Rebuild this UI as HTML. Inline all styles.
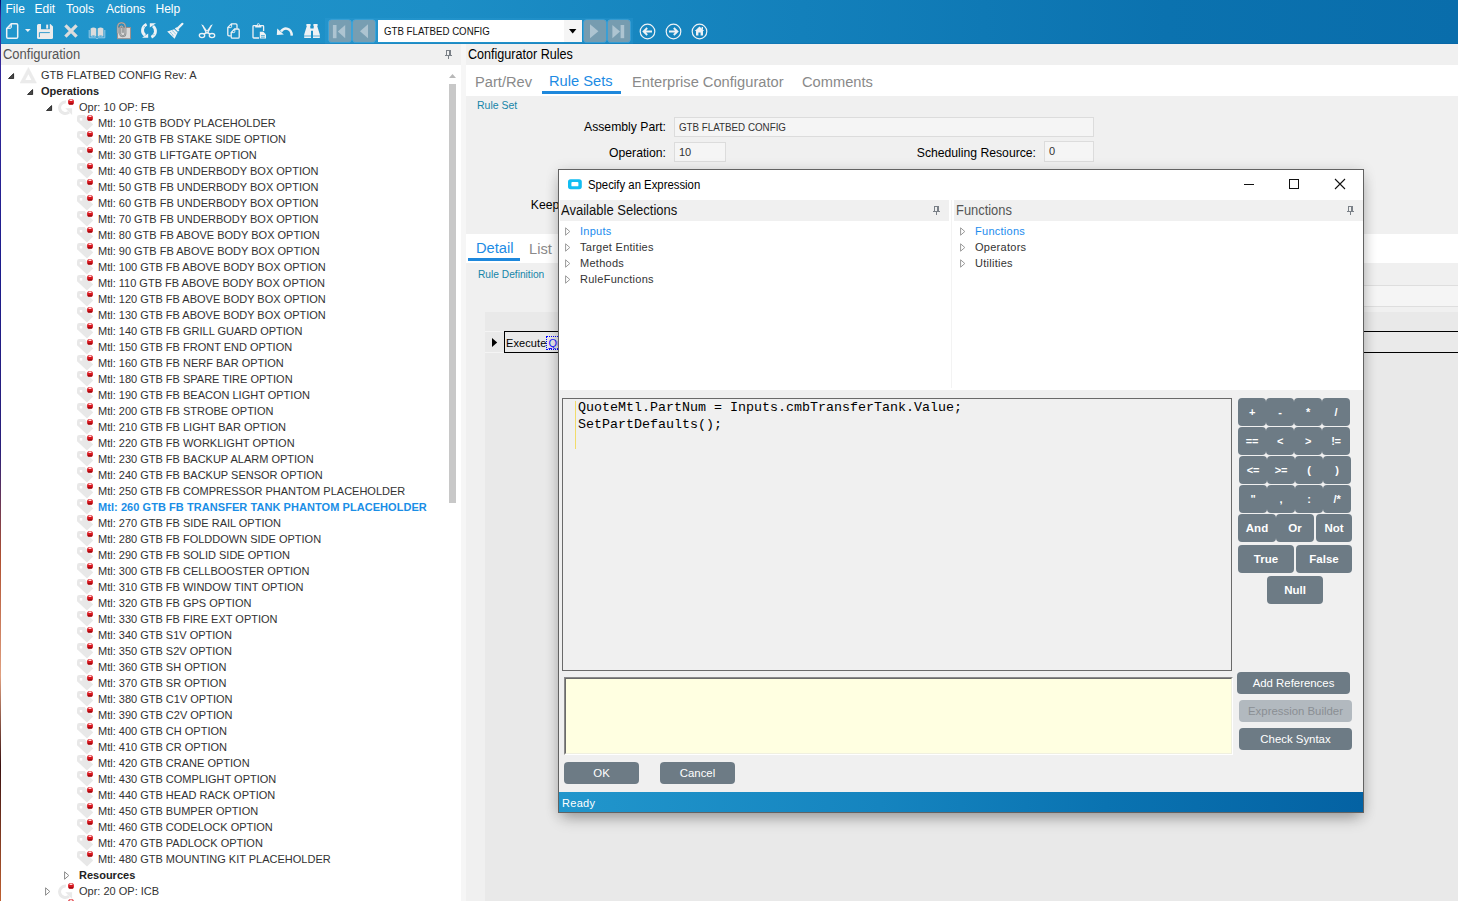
<!DOCTYPE html>
<html lang="en"><head><meta charset="utf-8"><title>Configurator Rules</title>
<style>
*{box-sizing:border-box;margin:0;padding:0}
html,body{width:1458px;height:901px;overflow:hidden;background:#f0f0f0}
body{position:relative;font-family:"Liberation Sans",sans-serif;font-size:12px;color:#222;-webkit-font-smoothing:antialiased}
.abs{position:absolute}
.t{position:absolute;white-space:nowrap;line-height:1}
#edge{left:0;top:0;width:1px;height:901px;background:linear-gradient(#08086e 0,#3a2c9e 2%,#1c1c8c 30%,#2a1f7a 50%,#b05030 62%,#e0a080 75%,#3a1010 85%,#c06030 100%)}
#top{left:1px;top:0;width:1457px;height:44px;background:linear-gradient(90deg,#2196cc 0,#1c8ec6 30%,#1380bb 55%,#0b72af 80%,#096dab 100%)}
#topline{left:1px;top:43px;width:1457px;height:1px;background:rgba(0,70,140,.15)}
.menu{top:2px;font-size:12px;color:#fff;line-height:14px}
.hdr{top:44px;height:21px;background:#f0f0f0}
.hdrt{font-size:14.67px;top:46px;line-height:16px}
.white{background:#fff}
.sg{transform-origin:0 50%}
.tab{font-size:14.67px;color:#8a8a8a;line-height:18px}
.tab.on{color:#1c8be4}
.ul{background:#1e88dc;height:3px}
.sm{font-family:"Liberation Sans","DejaVu Sans",sans-serif;font-size:10.5px;color:#1585a8;line-height:12px}
.lbl{font-size:12.2px;color:#000;line-height:15px;text-align:right}
.fld{background:#f5f5f5;border:1px solid #dcdcdc;font-size:11px;color:#333;line-height:18.5px;padding-left:4px;white-space:nowrap;overflow:hidden}
.row{position:absolute;left:0;height:16px;line-height:16px;font-size:11px;color:#323232;white-space:nowrap}
.row b{color:#222}
.row.sel{color:#1a8ee6;font-weight:bold;letter-spacing:.06px}
.btn{position:absolute;background:#6d7b85;color:#fff;border-radius:4px;text-align:center;font-size:11.4px;white-space:nowrap}
.kb{font-weight:bold;font-size:11px;letter-spacing:-.2px;line-height:28px;height:28px;width:28px;border-radius:4px}
.kw{font-weight:bold;font-size:11.5px;line-height:28px;height:28px;border-radius:4px}
.dtree{font-family:"Liberation Sans","DejaVu Sans",sans-serif;font-size:11px;color:#333;line-height:16px;letter-spacing:.27px}
</style></head>
<body>
<div class="abs" id="top"></div><div class="abs" id="topline"></div>
<div class="abs" id="edge"></div>
<div class="t menu" style="left:5.5px">File</div>
<div class="t menu" style="left:34.5px">Edit</div>
<div class="t menu" style="left:66px">Tools</div>
<div class="t menu" style="left:106px">Actions</div>
<div class="t menu" style="left:155.5px">Help</div>
<div class="abs white" style="left:1px;top:65px;width:460px;height:836px"></div>
<div class="abs hdr" style="left:1px;width:460px"></div>
<div class="t hdrt sg" style="left:3px;color:#555;transform:scaleX(.885)">Configuration</div>
<svg class="abs" style="left:445px;top:50px" width="7" height="9" viewBox="0 0 7 9"><path d="M1 0H6V5H7V6H4V9H3V6H0V5H1Z M2 1V5H4V1Z" fill="#7a8087" fill-rule="evenodd"/></svg>
<svg class="abs" style="left:449px;top:74px" width="7" height="4" viewBox="0 0 7 4"><path d="M0 4L3.5 0L7 4Z" fill="#b8b8b8"/></svg>
<div class="abs" style="left:449px;top:84px;width:7px;height:419px;background:#c8c8c8"></div>
<svg class="abs" style="left:8px;top:73px" width="7" height="6" viewBox="0 0 7 6"><path d="M5.6 0.6V5.6H0.5Z" fill="#4a4a4a" stroke="#222" stroke-width=".9" stroke-linejoin="round"/></svg>
<svg class="abs" style="left:20px;top:67px" width="17" height="17" viewBox="0 0 17 17"><path d="M8.4 0.6L16.4 16H0.2Z" fill="#ebebeb" stroke="#ebebeb" stroke-width=".6" stroke-linejoin="round"/><path d="M8.4 7.2L11.4 13H5.4Z" fill="#fff"/></svg>
<div class="row " style="top:67px;left:41px">GTB FLATBED CONFIG Rev: A</div>
<svg class="abs" style="left:27px;top:89px" width="7" height="6" viewBox="0 0 7 6"><path d="M5.6 0.6V5.6H0.5Z" fill="#4a4a4a" stroke="#222" stroke-width=".9" stroke-linejoin="round"/></svg>
<div class="row " style="top:83px;left:41px"><b>Operations</b></div>
<svg class="abs" style="left:46px;top:105px" width="7" height="6" viewBox="0 0 7 6"><path d="M5.6 0.6V5.6H0.5Z" fill="#4a4a4a" stroke="#222" stroke-width=".9" stroke-linejoin="round"/></svg>
<svg class="abs" style="left:58px;top:100px" width="15" height="16" viewBox="0 0 15 16"><path d="M7.9 2.1A5.7 5.7 0 1 0 11 12.1" fill="none" stroke="#e9e9e9" stroke-width="3"/><path d="M7.3 8.2H14.1V14.9Z" fill="#e9e9e9"/></svg>
<svg class="abs" style="left:68px;top:99px" width="6" height="6" viewBox="0 0 6 6"><rect x="0.1" y="0.1" width="5.8" height="5.7" rx="2.6" fill="#d8161e"/><rect x="1.4" y="0.5" width="3.2" height="1.5" rx=".7" fill="#ffd9d9"/><rect x="0.6" y="3.9" width="4.8" height="1.7" rx=".8" fill="#a00c12"/></svg>
<div class="row " style="top:99px;left:79px">Opr: 10 OP: FB</div>
<svg class="abs" style="left:77px;top:115px" width="17" height="17" viewBox="0 0 17 17"><path d="M0 2.4Q0 0 2.4 0H7.6L16.2 9.6L10 15.6L0 6.2Z" fill="#e8e8e8"/><rect x="2.8" y="2.9" width="2.5" height="2.5" rx=".5" fill="#fff"/></svg>
<svg class="abs" style="left:87px;top:115px" width="6" height="6" viewBox="0 0 6 6"><rect x="0.1" y="0.1" width="5.8" height="5.7" rx="2.6" fill="#d8161e"/><rect x="1.4" y="0.5" width="3.2" height="1.5" rx=".7" fill="#ffd9d9"/><rect x="0.6" y="3.9" width="4.8" height="1.7" rx=".8" fill="#a00c12"/></svg>
<div class="row " style="top:115px;left:98px">Mtl: 10 GTB BODY PLACEHOLDER</div>
<svg class="abs" style="left:77px;top:131px" width="17" height="17" viewBox="0 0 17 17"><path d="M0 2.4Q0 0 2.4 0H7.6L16.2 9.6L10 15.6L0 6.2Z" fill="#e8e8e8"/><rect x="2.8" y="2.9" width="2.5" height="2.5" rx=".5" fill="#fff"/></svg>
<svg class="abs" style="left:87px;top:131px" width="6" height="6" viewBox="0 0 6 6"><rect x="0.1" y="0.1" width="5.8" height="5.7" rx="2.6" fill="#d8161e"/><rect x="1.4" y="0.5" width="3.2" height="1.5" rx=".7" fill="#ffd9d9"/><rect x="0.6" y="3.9" width="4.8" height="1.7" rx=".8" fill="#a00c12"/></svg>
<div class="row " style="top:131px;left:98px">Mtl: 20 GTB FB STAKE SIDE OPTION</div>
<svg class="abs" style="left:77px;top:147px" width="17" height="17" viewBox="0 0 17 17"><path d="M0 2.4Q0 0 2.4 0H7.6L16.2 9.6L10 15.6L0 6.2Z" fill="#e8e8e8"/><rect x="2.8" y="2.9" width="2.5" height="2.5" rx=".5" fill="#fff"/></svg>
<svg class="abs" style="left:87px;top:147px" width="6" height="6" viewBox="0 0 6 6"><rect x="0.1" y="0.1" width="5.8" height="5.7" rx="2.6" fill="#d8161e"/><rect x="1.4" y="0.5" width="3.2" height="1.5" rx=".7" fill="#ffd9d9"/><rect x="0.6" y="3.9" width="4.8" height="1.7" rx=".8" fill="#a00c12"/></svg>
<div class="row " style="top:147px;left:98px">Mtl: 30 GTB LIFTGATE OPTION</div>
<svg class="abs" style="left:77px;top:163px" width="17" height="17" viewBox="0 0 17 17"><path d="M0 2.4Q0 0 2.4 0H7.6L16.2 9.6L10 15.6L0 6.2Z" fill="#e8e8e8"/><rect x="2.8" y="2.9" width="2.5" height="2.5" rx=".5" fill="#fff"/></svg>
<svg class="abs" style="left:87px;top:163px" width="6" height="6" viewBox="0 0 6 6"><rect x="0.1" y="0.1" width="5.8" height="5.7" rx="2.6" fill="#d8161e"/><rect x="1.4" y="0.5" width="3.2" height="1.5" rx=".7" fill="#ffd9d9"/><rect x="0.6" y="3.9" width="4.8" height="1.7" rx=".8" fill="#a00c12"/></svg>
<div class="row " style="top:163px;left:98px">Mtl: 40 GTB FB UNDERBODY BOX OPTION</div>
<svg class="abs" style="left:77px;top:179px" width="17" height="17" viewBox="0 0 17 17"><path d="M0 2.4Q0 0 2.4 0H7.6L16.2 9.6L10 15.6L0 6.2Z" fill="#e8e8e8"/><rect x="2.8" y="2.9" width="2.5" height="2.5" rx=".5" fill="#fff"/></svg>
<svg class="abs" style="left:87px;top:179px" width="6" height="6" viewBox="0 0 6 6"><rect x="0.1" y="0.1" width="5.8" height="5.7" rx="2.6" fill="#d8161e"/><rect x="1.4" y="0.5" width="3.2" height="1.5" rx=".7" fill="#ffd9d9"/><rect x="0.6" y="3.9" width="4.8" height="1.7" rx=".8" fill="#a00c12"/></svg>
<div class="row " style="top:179px;left:98px">Mtl: 50 GTB FB UNDERBODY BOX OPTION</div>
<svg class="abs" style="left:77px;top:195px" width="17" height="17" viewBox="0 0 17 17"><path d="M0 2.4Q0 0 2.4 0H7.6L16.2 9.6L10 15.6L0 6.2Z" fill="#e8e8e8"/><rect x="2.8" y="2.9" width="2.5" height="2.5" rx=".5" fill="#fff"/></svg>
<svg class="abs" style="left:87px;top:195px" width="6" height="6" viewBox="0 0 6 6"><rect x="0.1" y="0.1" width="5.8" height="5.7" rx="2.6" fill="#d8161e"/><rect x="1.4" y="0.5" width="3.2" height="1.5" rx=".7" fill="#ffd9d9"/><rect x="0.6" y="3.9" width="4.8" height="1.7" rx=".8" fill="#a00c12"/></svg>
<div class="row " style="top:195px;left:98px">Mtl: 60 GTB FB UNDERBODY BOX OPTION</div>
<svg class="abs" style="left:77px;top:211px" width="17" height="17" viewBox="0 0 17 17"><path d="M0 2.4Q0 0 2.4 0H7.6L16.2 9.6L10 15.6L0 6.2Z" fill="#e8e8e8"/><rect x="2.8" y="2.9" width="2.5" height="2.5" rx=".5" fill="#fff"/></svg>
<svg class="abs" style="left:87px;top:211px" width="6" height="6" viewBox="0 0 6 6"><rect x="0.1" y="0.1" width="5.8" height="5.7" rx="2.6" fill="#d8161e"/><rect x="1.4" y="0.5" width="3.2" height="1.5" rx=".7" fill="#ffd9d9"/><rect x="0.6" y="3.9" width="4.8" height="1.7" rx=".8" fill="#a00c12"/></svg>
<div class="row " style="top:211px;left:98px">Mtl: 70 GTB FB UNDERBODY BOX OPTION</div>
<svg class="abs" style="left:77px;top:227px" width="17" height="17" viewBox="0 0 17 17"><path d="M0 2.4Q0 0 2.4 0H7.6L16.2 9.6L10 15.6L0 6.2Z" fill="#e8e8e8"/><rect x="2.8" y="2.9" width="2.5" height="2.5" rx=".5" fill="#fff"/></svg>
<svg class="abs" style="left:87px;top:227px" width="6" height="6" viewBox="0 0 6 6"><rect x="0.1" y="0.1" width="5.8" height="5.7" rx="2.6" fill="#d8161e"/><rect x="1.4" y="0.5" width="3.2" height="1.5" rx=".7" fill="#ffd9d9"/><rect x="0.6" y="3.9" width="4.8" height="1.7" rx=".8" fill="#a00c12"/></svg>
<div class="row " style="top:227px;left:98px">Mtl: 80 GTB FB ABOVE BODY BOX OPTION</div>
<svg class="abs" style="left:77px;top:243px" width="17" height="17" viewBox="0 0 17 17"><path d="M0 2.4Q0 0 2.4 0H7.6L16.2 9.6L10 15.6L0 6.2Z" fill="#e8e8e8"/><rect x="2.8" y="2.9" width="2.5" height="2.5" rx=".5" fill="#fff"/></svg>
<svg class="abs" style="left:87px;top:243px" width="6" height="6" viewBox="0 0 6 6"><rect x="0.1" y="0.1" width="5.8" height="5.7" rx="2.6" fill="#d8161e"/><rect x="1.4" y="0.5" width="3.2" height="1.5" rx=".7" fill="#ffd9d9"/><rect x="0.6" y="3.9" width="4.8" height="1.7" rx=".8" fill="#a00c12"/></svg>
<div class="row " style="top:243px;left:98px">Mtl: 90 GTB FB ABOVE BODY BOX OPTION</div>
<svg class="abs" style="left:77px;top:259px" width="17" height="17" viewBox="0 0 17 17"><path d="M0 2.4Q0 0 2.4 0H7.6L16.2 9.6L10 15.6L0 6.2Z" fill="#e8e8e8"/><rect x="2.8" y="2.9" width="2.5" height="2.5" rx=".5" fill="#fff"/></svg>
<svg class="abs" style="left:87px;top:259px" width="6" height="6" viewBox="0 0 6 6"><rect x="0.1" y="0.1" width="5.8" height="5.7" rx="2.6" fill="#d8161e"/><rect x="1.4" y="0.5" width="3.2" height="1.5" rx=".7" fill="#ffd9d9"/><rect x="0.6" y="3.9" width="4.8" height="1.7" rx=".8" fill="#a00c12"/></svg>
<div class="row " style="top:259px;left:98px">Mtl: 100 GTB FB ABOVE BODY BOX OPTION</div>
<svg class="abs" style="left:77px;top:275px" width="17" height="17" viewBox="0 0 17 17"><path d="M0 2.4Q0 0 2.4 0H7.6L16.2 9.6L10 15.6L0 6.2Z" fill="#e8e8e8"/><rect x="2.8" y="2.9" width="2.5" height="2.5" rx=".5" fill="#fff"/></svg>
<svg class="abs" style="left:87px;top:275px" width="6" height="6" viewBox="0 0 6 6"><rect x="0.1" y="0.1" width="5.8" height="5.7" rx="2.6" fill="#d8161e"/><rect x="1.4" y="0.5" width="3.2" height="1.5" rx=".7" fill="#ffd9d9"/><rect x="0.6" y="3.9" width="4.8" height="1.7" rx=".8" fill="#a00c12"/></svg>
<div class="row " style="top:275px;left:98px">Mtl: 110 GTB FB ABOVE BODY BOX OPTION</div>
<svg class="abs" style="left:77px;top:291px" width="17" height="17" viewBox="0 0 17 17"><path d="M0 2.4Q0 0 2.4 0H7.6L16.2 9.6L10 15.6L0 6.2Z" fill="#e8e8e8"/><rect x="2.8" y="2.9" width="2.5" height="2.5" rx=".5" fill="#fff"/></svg>
<svg class="abs" style="left:87px;top:291px" width="6" height="6" viewBox="0 0 6 6"><rect x="0.1" y="0.1" width="5.8" height="5.7" rx="2.6" fill="#d8161e"/><rect x="1.4" y="0.5" width="3.2" height="1.5" rx=".7" fill="#ffd9d9"/><rect x="0.6" y="3.9" width="4.8" height="1.7" rx=".8" fill="#a00c12"/></svg>
<div class="row " style="top:291px;left:98px">Mtl: 120 GTB FB ABOVE BODY BOX OPTION</div>
<svg class="abs" style="left:77px;top:307px" width="17" height="17" viewBox="0 0 17 17"><path d="M0 2.4Q0 0 2.4 0H7.6L16.2 9.6L10 15.6L0 6.2Z" fill="#e8e8e8"/><rect x="2.8" y="2.9" width="2.5" height="2.5" rx=".5" fill="#fff"/></svg>
<svg class="abs" style="left:87px;top:307px" width="6" height="6" viewBox="0 0 6 6"><rect x="0.1" y="0.1" width="5.8" height="5.7" rx="2.6" fill="#d8161e"/><rect x="1.4" y="0.5" width="3.2" height="1.5" rx=".7" fill="#ffd9d9"/><rect x="0.6" y="3.9" width="4.8" height="1.7" rx=".8" fill="#a00c12"/></svg>
<div class="row " style="top:307px;left:98px">Mtl: 130 GTB FB ABOVE BODY BOX OPTION</div>
<svg class="abs" style="left:77px;top:323px" width="17" height="17" viewBox="0 0 17 17"><path d="M0 2.4Q0 0 2.4 0H7.6L16.2 9.6L10 15.6L0 6.2Z" fill="#e8e8e8"/><rect x="2.8" y="2.9" width="2.5" height="2.5" rx=".5" fill="#fff"/></svg>
<svg class="abs" style="left:87px;top:323px" width="6" height="6" viewBox="0 0 6 6"><rect x="0.1" y="0.1" width="5.8" height="5.7" rx="2.6" fill="#d8161e"/><rect x="1.4" y="0.5" width="3.2" height="1.5" rx=".7" fill="#ffd9d9"/><rect x="0.6" y="3.9" width="4.8" height="1.7" rx=".8" fill="#a00c12"/></svg>
<div class="row " style="top:323px;left:98px">Mtl: 140 GTB FB GRILL GUARD OPTION</div>
<svg class="abs" style="left:77px;top:339px" width="17" height="17" viewBox="0 0 17 17"><path d="M0 2.4Q0 0 2.4 0H7.6L16.2 9.6L10 15.6L0 6.2Z" fill="#e8e8e8"/><rect x="2.8" y="2.9" width="2.5" height="2.5" rx=".5" fill="#fff"/></svg>
<svg class="abs" style="left:87px;top:339px" width="6" height="6" viewBox="0 0 6 6"><rect x="0.1" y="0.1" width="5.8" height="5.7" rx="2.6" fill="#d8161e"/><rect x="1.4" y="0.5" width="3.2" height="1.5" rx=".7" fill="#ffd9d9"/><rect x="0.6" y="3.9" width="4.8" height="1.7" rx=".8" fill="#a00c12"/></svg>
<div class="row " style="top:339px;left:98px">Mtl: 150 GTB FB FRONT END OPTION</div>
<svg class="abs" style="left:77px;top:355px" width="17" height="17" viewBox="0 0 17 17"><path d="M0 2.4Q0 0 2.4 0H7.6L16.2 9.6L10 15.6L0 6.2Z" fill="#e8e8e8"/><rect x="2.8" y="2.9" width="2.5" height="2.5" rx=".5" fill="#fff"/></svg>
<svg class="abs" style="left:87px;top:355px" width="6" height="6" viewBox="0 0 6 6"><rect x="0.1" y="0.1" width="5.8" height="5.7" rx="2.6" fill="#d8161e"/><rect x="1.4" y="0.5" width="3.2" height="1.5" rx=".7" fill="#ffd9d9"/><rect x="0.6" y="3.9" width="4.8" height="1.7" rx=".8" fill="#a00c12"/></svg>
<div class="row " style="top:355px;left:98px">Mtl: 160 GTB FB NERF BAR OPTION</div>
<svg class="abs" style="left:77px;top:371px" width="17" height="17" viewBox="0 0 17 17"><path d="M0 2.4Q0 0 2.4 0H7.6L16.2 9.6L10 15.6L0 6.2Z" fill="#e8e8e8"/><rect x="2.8" y="2.9" width="2.5" height="2.5" rx=".5" fill="#fff"/></svg>
<svg class="abs" style="left:87px;top:371px" width="6" height="6" viewBox="0 0 6 6"><rect x="0.1" y="0.1" width="5.8" height="5.7" rx="2.6" fill="#d8161e"/><rect x="1.4" y="0.5" width="3.2" height="1.5" rx=".7" fill="#ffd9d9"/><rect x="0.6" y="3.9" width="4.8" height="1.7" rx=".8" fill="#a00c12"/></svg>
<div class="row " style="top:371px;left:98px">Mtl: 180 GTB FB SPARE TIRE OPTION</div>
<svg class="abs" style="left:77px;top:387px" width="17" height="17" viewBox="0 0 17 17"><path d="M0 2.4Q0 0 2.4 0H7.6L16.2 9.6L10 15.6L0 6.2Z" fill="#e8e8e8"/><rect x="2.8" y="2.9" width="2.5" height="2.5" rx=".5" fill="#fff"/></svg>
<svg class="abs" style="left:87px;top:387px" width="6" height="6" viewBox="0 0 6 6"><rect x="0.1" y="0.1" width="5.8" height="5.7" rx="2.6" fill="#d8161e"/><rect x="1.4" y="0.5" width="3.2" height="1.5" rx=".7" fill="#ffd9d9"/><rect x="0.6" y="3.9" width="4.8" height="1.7" rx=".8" fill="#a00c12"/></svg>
<div class="row " style="top:387px;left:98px">Mtl: 190 GTB FB BEACON LIGHT OPTION</div>
<svg class="abs" style="left:77px;top:403px" width="17" height="17" viewBox="0 0 17 17"><path d="M0 2.4Q0 0 2.4 0H7.6L16.2 9.6L10 15.6L0 6.2Z" fill="#e8e8e8"/><rect x="2.8" y="2.9" width="2.5" height="2.5" rx=".5" fill="#fff"/></svg>
<svg class="abs" style="left:87px;top:403px" width="6" height="6" viewBox="0 0 6 6"><rect x="0.1" y="0.1" width="5.8" height="5.7" rx="2.6" fill="#d8161e"/><rect x="1.4" y="0.5" width="3.2" height="1.5" rx=".7" fill="#ffd9d9"/><rect x="0.6" y="3.9" width="4.8" height="1.7" rx=".8" fill="#a00c12"/></svg>
<div class="row " style="top:403px;left:98px">Mtl: 200 GTB FB STROBE OPTION</div>
<svg class="abs" style="left:77px;top:419px" width="17" height="17" viewBox="0 0 17 17"><path d="M0 2.4Q0 0 2.4 0H7.6L16.2 9.6L10 15.6L0 6.2Z" fill="#e8e8e8"/><rect x="2.8" y="2.9" width="2.5" height="2.5" rx=".5" fill="#fff"/></svg>
<svg class="abs" style="left:87px;top:419px" width="6" height="6" viewBox="0 0 6 6"><rect x="0.1" y="0.1" width="5.8" height="5.7" rx="2.6" fill="#d8161e"/><rect x="1.4" y="0.5" width="3.2" height="1.5" rx=".7" fill="#ffd9d9"/><rect x="0.6" y="3.9" width="4.8" height="1.7" rx=".8" fill="#a00c12"/></svg>
<div class="row " style="top:419px;left:98px">Mtl: 210 GTB FB LIGHT BAR OPTION</div>
<svg class="abs" style="left:77px;top:435px" width="17" height="17" viewBox="0 0 17 17"><path d="M0 2.4Q0 0 2.4 0H7.6L16.2 9.6L10 15.6L0 6.2Z" fill="#e8e8e8"/><rect x="2.8" y="2.9" width="2.5" height="2.5" rx=".5" fill="#fff"/></svg>
<svg class="abs" style="left:87px;top:435px" width="6" height="6" viewBox="0 0 6 6"><rect x="0.1" y="0.1" width="5.8" height="5.7" rx="2.6" fill="#d8161e"/><rect x="1.4" y="0.5" width="3.2" height="1.5" rx=".7" fill="#ffd9d9"/><rect x="0.6" y="3.9" width="4.8" height="1.7" rx=".8" fill="#a00c12"/></svg>
<div class="row " style="top:435px;left:98px">Mtl: 220 GTB FB WORKLIGHT OPTION</div>
<svg class="abs" style="left:77px;top:451px" width="17" height="17" viewBox="0 0 17 17"><path d="M0 2.4Q0 0 2.4 0H7.6L16.2 9.6L10 15.6L0 6.2Z" fill="#e8e8e8"/><rect x="2.8" y="2.9" width="2.5" height="2.5" rx=".5" fill="#fff"/></svg>
<svg class="abs" style="left:87px;top:451px" width="6" height="6" viewBox="0 0 6 6"><rect x="0.1" y="0.1" width="5.8" height="5.7" rx="2.6" fill="#d8161e"/><rect x="1.4" y="0.5" width="3.2" height="1.5" rx=".7" fill="#ffd9d9"/><rect x="0.6" y="3.9" width="4.8" height="1.7" rx=".8" fill="#a00c12"/></svg>
<div class="row " style="top:451px;left:98px">Mtl: 230 GTB FB BACKUP ALARM OPTION</div>
<svg class="abs" style="left:77px;top:467px" width="17" height="17" viewBox="0 0 17 17"><path d="M0 2.4Q0 0 2.4 0H7.6L16.2 9.6L10 15.6L0 6.2Z" fill="#e8e8e8"/><rect x="2.8" y="2.9" width="2.5" height="2.5" rx=".5" fill="#fff"/></svg>
<svg class="abs" style="left:87px;top:467px" width="6" height="6" viewBox="0 0 6 6"><rect x="0.1" y="0.1" width="5.8" height="5.7" rx="2.6" fill="#d8161e"/><rect x="1.4" y="0.5" width="3.2" height="1.5" rx=".7" fill="#ffd9d9"/><rect x="0.6" y="3.9" width="4.8" height="1.7" rx=".8" fill="#a00c12"/></svg>
<div class="row " style="top:467px;left:98px">Mtl: 240 GTB FB BACKUP SENSOR OPTION</div>
<svg class="abs" style="left:77px;top:483px" width="17" height="17" viewBox="0 0 17 17"><path d="M0 2.4Q0 0 2.4 0H7.6L16.2 9.6L10 15.6L0 6.2Z" fill="#e8e8e8"/><rect x="2.8" y="2.9" width="2.5" height="2.5" rx=".5" fill="#fff"/></svg>
<svg class="abs" style="left:87px;top:483px" width="6" height="6" viewBox="0 0 6 6"><rect x="0.1" y="0.1" width="5.8" height="5.7" rx="2.6" fill="#d8161e"/><rect x="1.4" y="0.5" width="3.2" height="1.5" rx=".7" fill="#ffd9d9"/><rect x="0.6" y="3.9" width="4.8" height="1.7" rx=".8" fill="#a00c12"/></svg>
<div class="row " style="top:483px;left:98px">Mtl: 250 GTB FB COMPRESSOR PHANTOM PLACEHOLDER</div>
<svg class="abs" style="left:77px;top:499px" width="17" height="17" viewBox="0 0 17 17"><path d="M0 2.4Q0 0 2.4 0H7.6L16.2 9.6L10 15.6L0 6.2Z" fill="#e8e8e8"/><rect x="2.8" y="2.9" width="2.5" height="2.5" rx=".5" fill="#fff"/></svg>
<svg class="abs" style="left:87px;top:499px" width="6" height="6" viewBox="0 0 6 6"><rect x="0.1" y="0.1" width="5.8" height="5.7" rx="2.6" fill="#d8161e"/><rect x="1.4" y="0.5" width="3.2" height="1.5" rx=".7" fill="#ffd9d9"/><rect x="0.6" y="3.9" width="4.8" height="1.7" rx=".8" fill="#a00c12"/></svg>
<div class="row sel" style="top:499px;left:98px">Mtl: 260 GTB FB TRANSFER TANK PHANTOM PLACEHOLDER</div>
<svg class="abs" style="left:77px;top:515px" width="17" height="17" viewBox="0 0 17 17"><path d="M0 2.4Q0 0 2.4 0H7.6L16.2 9.6L10 15.6L0 6.2Z" fill="#e8e8e8"/><rect x="2.8" y="2.9" width="2.5" height="2.5" rx=".5" fill="#fff"/></svg>
<svg class="abs" style="left:87px;top:515px" width="6" height="6" viewBox="0 0 6 6"><rect x="0.1" y="0.1" width="5.8" height="5.7" rx="2.6" fill="#d8161e"/><rect x="1.4" y="0.5" width="3.2" height="1.5" rx=".7" fill="#ffd9d9"/><rect x="0.6" y="3.9" width="4.8" height="1.7" rx=".8" fill="#a00c12"/></svg>
<div class="row " style="top:515px;left:98px">Mtl: 270 GTB FB SIDE RAIL OPTION</div>
<svg class="abs" style="left:77px;top:531px" width="17" height="17" viewBox="0 0 17 17"><path d="M0 2.4Q0 0 2.4 0H7.6L16.2 9.6L10 15.6L0 6.2Z" fill="#e8e8e8"/><rect x="2.8" y="2.9" width="2.5" height="2.5" rx=".5" fill="#fff"/></svg>
<svg class="abs" style="left:87px;top:531px" width="6" height="6" viewBox="0 0 6 6"><rect x="0.1" y="0.1" width="5.8" height="5.7" rx="2.6" fill="#d8161e"/><rect x="1.4" y="0.5" width="3.2" height="1.5" rx=".7" fill="#ffd9d9"/><rect x="0.6" y="3.9" width="4.8" height="1.7" rx=".8" fill="#a00c12"/></svg>
<div class="row " style="top:531px;left:98px">Mtl: 280 GTB FB FOLDDOWN SIDE OPTION</div>
<svg class="abs" style="left:77px;top:547px" width="17" height="17" viewBox="0 0 17 17"><path d="M0 2.4Q0 0 2.4 0H7.6L16.2 9.6L10 15.6L0 6.2Z" fill="#e8e8e8"/><rect x="2.8" y="2.9" width="2.5" height="2.5" rx=".5" fill="#fff"/></svg>
<svg class="abs" style="left:87px;top:547px" width="6" height="6" viewBox="0 0 6 6"><rect x="0.1" y="0.1" width="5.8" height="5.7" rx="2.6" fill="#d8161e"/><rect x="1.4" y="0.5" width="3.2" height="1.5" rx=".7" fill="#ffd9d9"/><rect x="0.6" y="3.9" width="4.8" height="1.7" rx=".8" fill="#a00c12"/></svg>
<div class="row " style="top:547px;left:98px">Mtl: 290 GTB FB SOLID SIDE OPTION</div>
<svg class="abs" style="left:77px;top:563px" width="17" height="17" viewBox="0 0 17 17"><path d="M0 2.4Q0 0 2.4 0H7.6L16.2 9.6L10 15.6L0 6.2Z" fill="#e8e8e8"/><rect x="2.8" y="2.9" width="2.5" height="2.5" rx=".5" fill="#fff"/></svg>
<svg class="abs" style="left:87px;top:563px" width="6" height="6" viewBox="0 0 6 6"><rect x="0.1" y="0.1" width="5.8" height="5.7" rx="2.6" fill="#d8161e"/><rect x="1.4" y="0.5" width="3.2" height="1.5" rx=".7" fill="#ffd9d9"/><rect x="0.6" y="3.9" width="4.8" height="1.7" rx=".8" fill="#a00c12"/></svg>
<div class="row " style="top:563px;left:98px">Mtl: 300 GTB FB CELLBOOSTER OPTION</div>
<svg class="abs" style="left:77px;top:579px" width="17" height="17" viewBox="0 0 17 17"><path d="M0 2.4Q0 0 2.4 0H7.6L16.2 9.6L10 15.6L0 6.2Z" fill="#e8e8e8"/><rect x="2.8" y="2.9" width="2.5" height="2.5" rx=".5" fill="#fff"/></svg>
<svg class="abs" style="left:87px;top:579px" width="6" height="6" viewBox="0 0 6 6"><rect x="0.1" y="0.1" width="5.8" height="5.7" rx="2.6" fill="#d8161e"/><rect x="1.4" y="0.5" width="3.2" height="1.5" rx=".7" fill="#ffd9d9"/><rect x="0.6" y="3.9" width="4.8" height="1.7" rx=".8" fill="#a00c12"/></svg>
<div class="row " style="top:579px;left:98px">Mtl: 310 GTB FB WINDOW TINT OPTION</div>
<svg class="abs" style="left:77px;top:595px" width="17" height="17" viewBox="0 0 17 17"><path d="M0 2.4Q0 0 2.4 0H7.6L16.2 9.6L10 15.6L0 6.2Z" fill="#e8e8e8"/><rect x="2.8" y="2.9" width="2.5" height="2.5" rx=".5" fill="#fff"/></svg>
<svg class="abs" style="left:87px;top:595px" width="6" height="6" viewBox="0 0 6 6"><rect x="0.1" y="0.1" width="5.8" height="5.7" rx="2.6" fill="#d8161e"/><rect x="1.4" y="0.5" width="3.2" height="1.5" rx=".7" fill="#ffd9d9"/><rect x="0.6" y="3.9" width="4.8" height="1.7" rx=".8" fill="#a00c12"/></svg>
<div class="row " style="top:595px;left:98px">Mtl: 320 GTB FB GPS OPTION</div>
<svg class="abs" style="left:77px;top:611px" width="17" height="17" viewBox="0 0 17 17"><path d="M0 2.4Q0 0 2.4 0H7.6L16.2 9.6L10 15.6L0 6.2Z" fill="#e8e8e8"/><rect x="2.8" y="2.9" width="2.5" height="2.5" rx=".5" fill="#fff"/></svg>
<svg class="abs" style="left:87px;top:611px" width="6" height="6" viewBox="0 0 6 6"><rect x="0.1" y="0.1" width="5.8" height="5.7" rx="2.6" fill="#d8161e"/><rect x="1.4" y="0.5" width="3.2" height="1.5" rx=".7" fill="#ffd9d9"/><rect x="0.6" y="3.9" width="4.8" height="1.7" rx=".8" fill="#a00c12"/></svg>
<div class="row " style="top:611px;left:98px">Mtl: 330 GTB FB FIRE EXT OPTION</div>
<svg class="abs" style="left:77px;top:627px" width="17" height="17" viewBox="0 0 17 17"><path d="M0 2.4Q0 0 2.4 0H7.6L16.2 9.6L10 15.6L0 6.2Z" fill="#e8e8e8"/><rect x="2.8" y="2.9" width="2.5" height="2.5" rx=".5" fill="#fff"/></svg>
<svg class="abs" style="left:87px;top:627px" width="6" height="6" viewBox="0 0 6 6"><rect x="0.1" y="0.1" width="5.8" height="5.7" rx="2.6" fill="#d8161e"/><rect x="1.4" y="0.5" width="3.2" height="1.5" rx=".7" fill="#ffd9d9"/><rect x="0.6" y="3.9" width="4.8" height="1.7" rx=".8" fill="#a00c12"/></svg>
<div class="row " style="top:627px;left:98px">Mtl: 340 GTB S1V OPTION</div>
<svg class="abs" style="left:77px;top:643px" width="17" height="17" viewBox="0 0 17 17"><path d="M0 2.4Q0 0 2.4 0H7.6L16.2 9.6L10 15.6L0 6.2Z" fill="#e8e8e8"/><rect x="2.8" y="2.9" width="2.5" height="2.5" rx=".5" fill="#fff"/></svg>
<svg class="abs" style="left:87px;top:643px" width="6" height="6" viewBox="0 0 6 6"><rect x="0.1" y="0.1" width="5.8" height="5.7" rx="2.6" fill="#d8161e"/><rect x="1.4" y="0.5" width="3.2" height="1.5" rx=".7" fill="#ffd9d9"/><rect x="0.6" y="3.9" width="4.8" height="1.7" rx=".8" fill="#a00c12"/></svg>
<div class="row " style="top:643px;left:98px">Mtl: 350 GTB S2V OPTION</div>
<svg class="abs" style="left:77px;top:659px" width="17" height="17" viewBox="0 0 17 17"><path d="M0 2.4Q0 0 2.4 0H7.6L16.2 9.6L10 15.6L0 6.2Z" fill="#e8e8e8"/><rect x="2.8" y="2.9" width="2.5" height="2.5" rx=".5" fill="#fff"/></svg>
<svg class="abs" style="left:87px;top:659px" width="6" height="6" viewBox="0 0 6 6"><rect x="0.1" y="0.1" width="5.8" height="5.7" rx="2.6" fill="#d8161e"/><rect x="1.4" y="0.5" width="3.2" height="1.5" rx=".7" fill="#ffd9d9"/><rect x="0.6" y="3.9" width="4.8" height="1.7" rx=".8" fill="#a00c12"/></svg>
<div class="row " style="top:659px;left:98px">Mtl: 360 GTB SH OPTION</div>
<svg class="abs" style="left:77px;top:675px" width="17" height="17" viewBox="0 0 17 17"><path d="M0 2.4Q0 0 2.4 0H7.6L16.2 9.6L10 15.6L0 6.2Z" fill="#e8e8e8"/><rect x="2.8" y="2.9" width="2.5" height="2.5" rx=".5" fill="#fff"/></svg>
<svg class="abs" style="left:87px;top:675px" width="6" height="6" viewBox="0 0 6 6"><rect x="0.1" y="0.1" width="5.8" height="5.7" rx="2.6" fill="#d8161e"/><rect x="1.4" y="0.5" width="3.2" height="1.5" rx=".7" fill="#ffd9d9"/><rect x="0.6" y="3.9" width="4.8" height="1.7" rx=".8" fill="#a00c12"/></svg>
<div class="row " style="top:675px;left:98px">Mtl: 370 GTB SR OPTION</div>
<svg class="abs" style="left:77px;top:691px" width="17" height="17" viewBox="0 0 17 17"><path d="M0 2.4Q0 0 2.4 0H7.6L16.2 9.6L10 15.6L0 6.2Z" fill="#e8e8e8"/><rect x="2.8" y="2.9" width="2.5" height="2.5" rx=".5" fill="#fff"/></svg>
<svg class="abs" style="left:87px;top:691px" width="6" height="6" viewBox="0 0 6 6"><rect x="0.1" y="0.1" width="5.8" height="5.7" rx="2.6" fill="#d8161e"/><rect x="1.4" y="0.5" width="3.2" height="1.5" rx=".7" fill="#ffd9d9"/><rect x="0.6" y="3.9" width="4.8" height="1.7" rx=".8" fill="#a00c12"/></svg>
<div class="row " style="top:691px;left:98px">Mtl: 380 GTB C1V OPTION</div>
<svg class="abs" style="left:77px;top:707px" width="17" height="17" viewBox="0 0 17 17"><path d="M0 2.4Q0 0 2.4 0H7.6L16.2 9.6L10 15.6L0 6.2Z" fill="#e8e8e8"/><rect x="2.8" y="2.9" width="2.5" height="2.5" rx=".5" fill="#fff"/></svg>
<svg class="abs" style="left:87px;top:707px" width="6" height="6" viewBox="0 0 6 6"><rect x="0.1" y="0.1" width="5.8" height="5.7" rx="2.6" fill="#d8161e"/><rect x="1.4" y="0.5" width="3.2" height="1.5" rx=".7" fill="#ffd9d9"/><rect x="0.6" y="3.9" width="4.8" height="1.7" rx=".8" fill="#a00c12"/></svg>
<div class="row " style="top:707px;left:98px">Mtl: 390 GTB C2V OPTION</div>
<svg class="abs" style="left:77px;top:723px" width="17" height="17" viewBox="0 0 17 17"><path d="M0 2.4Q0 0 2.4 0H7.6L16.2 9.6L10 15.6L0 6.2Z" fill="#e8e8e8"/><rect x="2.8" y="2.9" width="2.5" height="2.5" rx=".5" fill="#fff"/></svg>
<svg class="abs" style="left:87px;top:723px" width="6" height="6" viewBox="0 0 6 6"><rect x="0.1" y="0.1" width="5.8" height="5.7" rx="2.6" fill="#d8161e"/><rect x="1.4" y="0.5" width="3.2" height="1.5" rx=".7" fill="#ffd9d9"/><rect x="0.6" y="3.9" width="4.8" height="1.7" rx=".8" fill="#a00c12"/></svg>
<div class="row " style="top:723px;left:98px">Mtl: 400 GTB CH OPTION</div>
<svg class="abs" style="left:77px;top:739px" width="17" height="17" viewBox="0 0 17 17"><path d="M0 2.4Q0 0 2.4 0H7.6L16.2 9.6L10 15.6L0 6.2Z" fill="#e8e8e8"/><rect x="2.8" y="2.9" width="2.5" height="2.5" rx=".5" fill="#fff"/></svg>
<svg class="abs" style="left:87px;top:739px" width="6" height="6" viewBox="0 0 6 6"><rect x="0.1" y="0.1" width="5.8" height="5.7" rx="2.6" fill="#d8161e"/><rect x="1.4" y="0.5" width="3.2" height="1.5" rx=".7" fill="#ffd9d9"/><rect x="0.6" y="3.9" width="4.8" height="1.7" rx=".8" fill="#a00c12"/></svg>
<div class="row " style="top:739px;left:98px">Mtl: 410 GTB CR OPTION</div>
<svg class="abs" style="left:77px;top:755px" width="17" height="17" viewBox="0 0 17 17"><path d="M0 2.4Q0 0 2.4 0H7.6L16.2 9.6L10 15.6L0 6.2Z" fill="#e8e8e8"/><rect x="2.8" y="2.9" width="2.5" height="2.5" rx=".5" fill="#fff"/></svg>
<svg class="abs" style="left:87px;top:755px" width="6" height="6" viewBox="0 0 6 6"><rect x="0.1" y="0.1" width="5.8" height="5.7" rx="2.6" fill="#d8161e"/><rect x="1.4" y="0.5" width="3.2" height="1.5" rx=".7" fill="#ffd9d9"/><rect x="0.6" y="3.9" width="4.8" height="1.7" rx=".8" fill="#a00c12"/></svg>
<div class="row " style="top:755px;left:98px">Mtl: 420 GTB CRANE OPTION</div>
<svg class="abs" style="left:77px;top:771px" width="17" height="17" viewBox="0 0 17 17"><path d="M0 2.4Q0 0 2.4 0H7.6L16.2 9.6L10 15.6L0 6.2Z" fill="#e8e8e8"/><rect x="2.8" y="2.9" width="2.5" height="2.5" rx=".5" fill="#fff"/></svg>
<svg class="abs" style="left:87px;top:771px" width="6" height="6" viewBox="0 0 6 6"><rect x="0.1" y="0.1" width="5.8" height="5.7" rx="2.6" fill="#d8161e"/><rect x="1.4" y="0.5" width="3.2" height="1.5" rx=".7" fill="#ffd9d9"/><rect x="0.6" y="3.9" width="4.8" height="1.7" rx=".8" fill="#a00c12"/></svg>
<div class="row " style="top:771px;left:98px">Mtl: 430 GTB COMPLIGHT OPTION</div>
<svg class="abs" style="left:77px;top:787px" width="17" height="17" viewBox="0 0 17 17"><path d="M0 2.4Q0 0 2.4 0H7.6L16.2 9.6L10 15.6L0 6.2Z" fill="#e8e8e8"/><rect x="2.8" y="2.9" width="2.5" height="2.5" rx=".5" fill="#fff"/></svg>
<svg class="abs" style="left:87px;top:787px" width="6" height="6" viewBox="0 0 6 6"><rect x="0.1" y="0.1" width="5.8" height="5.7" rx="2.6" fill="#d8161e"/><rect x="1.4" y="0.5" width="3.2" height="1.5" rx=".7" fill="#ffd9d9"/><rect x="0.6" y="3.9" width="4.8" height="1.7" rx=".8" fill="#a00c12"/></svg>
<div class="row " style="top:787px;left:98px">Mtl: 440 GTB HEAD RACK OPTION</div>
<svg class="abs" style="left:77px;top:803px" width="17" height="17" viewBox="0 0 17 17"><path d="M0 2.4Q0 0 2.4 0H7.6L16.2 9.6L10 15.6L0 6.2Z" fill="#e8e8e8"/><rect x="2.8" y="2.9" width="2.5" height="2.5" rx=".5" fill="#fff"/></svg>
<svg class="abs" style="left:87px;top:803px" width="6" height="6" viewBox="0 0 6 6"><rect x="0.1" y="0.1" width="5.8" height="5.7" rx="2.6" fill="#d8161e"/><rect x="1.4" y="0.5" width="3.2" height="1.5" rx=".7" fill="#ffd9d9"/><rect x="0.6" y="3.9" width="4.8" height="1.7" rx=".8" fill="#a00c12"/></svg>
<div class="row " style="top:803px;left:98px">Mtl: 450 GTB BUMPER OPTION</div>
<svg class="abs" style="left:77px;top:819px" width="17" height="17" viewBox="0 0 17 17"><path d="M0 2.4Q0 0 2.4 0H7.6L16.2 9.6L10 15.6L0 6.2Z" fill="#e8e8e8"/><rect x="2.8" y="2.9" width="2.5" height="2.5" rx=".5" fill="#fff"/></svg>
<svg class="abs" style="left:87px;top:819px" width="6" height="6" viewBox="0 0 6 6"><rect x="0.1" y="0.1" width="5.8" height="5.7" rx="2.6" fill="#d8161e"/><rect x="1.4" y="0.5" width="3.2" height="1.5" rx=".7" fill="#ffd9d9"/><rect x="0.6" y="3.9" width="4.8" height="1.7" rx=".8" fill="#a00c12"/></svg>
<div class="row " style="top:819px;left:98px">Mtl: 460 GTB CODELOCK OPTION</div>
<svg class="abs" style="left:77px;top:835px" width="17" height="17" viewBox="0 0 17 17"><path d="M0 2.4Q0 0 2.4 0H7.6L16.2 9.6L10 15.6L0 6.2Z" fill="#e8e8e8"/><rect x="2.8" y="2.9" width="2.5" height="2.5" rx=".5" fill="#fff"/></svg>
<svg class="abs" style="left:87px;top:835px" width="6" height="6" viewBox="0 0 6 6"><rect x="0.1" y="0.1" width="5.8" height="5.7" rx="2.6" fill="#d8161e"/><rect x="1.4" y="0.5" width="3.2" height="1.5" rx=".7" fill="#ffd9d9"/><rect x="0.6" y="3.9" width="4.8" height="1.7" rx=".8" fill="#a00c12"/></svg>
<div class="row " style="top:835px;left:98px">Mtl: 470 GTB PADLOCK OPTION</div>
<svg class="abs" style="left:77px;top:851px" width="17" height="17" viewBox="0 0 17 17"><path d="M0 2.4Q0 0 2.4 0H7.6L16.2 9.6L10 15.6L0 6.2Z" fill="#e8e8e8"/><rect x="2.8" y="2.9" width="2.5" height="2.5" rx=".5" fill="#fff"/></svg>
<svg class="abs" style="left:87px;top:851px" width="6" height="6" viewBox="0 0 6 6"><rect x="0.1" y="0.1" width="5.8" height="5.7" rx="2.6" fill="#d8161e"/><rect x="1.4" y="0.5" width="3.2" height="1.5" rx=".7" fill="#ffd9d9"/><rect x="0.6" y="3.9" width="4.8" height="1.7" rx=".8" fill="#a00c12"/></svg>
<div class="row " style="top:851px;left:98px">Mtl: 480 GTB MOUNTING KIT PLACEHOLDER</div>
<svg class="abs" style="left:64px;top:871px" width="6" height="9" viewBox="0 0 6 9"><path d="M0.6 0.8L4.8 4.5L0.6 8.2Z" fill="#fff" stroke="#8a8a8a" stroke-width="1"/></svg>
<div class="row " style="top:867px;left:79px"><b>Resources</b></div>
<svg class="abs" style="left:45px;top:887px" width="6" height="9" viewBox="0 0 6 9"><path d="M0.6 0.8L4.8 4.5L0.6 8.2Z" fill="#fff" stroke="#8a8a8a" stroke-width="1"/></svg>
<svg class="abs" style="left:58px;top:884px" width="15" height="16" viewBox="0 0 15 16"><path d="M7.9 2.1A5.7 5.7 0 1 0 11 12.1" fill="none" stroke="#e9e9e9" stroke-width="3"/><path d="M7.3 8.2H14.1V14.9Z" fill="#e9e9e9"/></svg>
<svg class="abs" style="left:68px;top:883px" width="6" height="6" viewBox="0 0 6 6"><rect x="0.1" y="0.1" width="5.8" height="5.7" rx="2.6" fill="#d8161e"/><rect x="1.4" y="0.5" width="3.2" height="1.5" rx=".7" fill="#ffd9d9"/><rect x="0.6" y="3.9" width="4.8" height="1.7" rx=".8" fill="#a00c12"/></svg>
<div class="row " style="top:883px;left:79px">Opr: 20 OP: ICB</div>
<svg class="abs" style="left:68px;top:899px" width="6" height="6" viewBox="0 0 6 6"><rect x="0.1" y="0.1" width="5.8" height="5.7" rx="2.6" fill="#d8161e"/><rect x="1.4" y="0.5" width="3.2" height="1.5" rx=".7" fill="#ffd9d9"/><rect x="0.6" y="3.9" width="4.8" height="1.7" rx=".8" fill="#a00c12"/></svg>
<div class="abs" style="left:461px;top:44px;width:5px;height:857px;background:#f6f6f6"></div>
<div class="t hdrt sg" style="left:468px;color:#000;transform:scaleX(.858)">Configurator Rules</div>
<div class="abs white" style="left:466px;top:65px;width:992px;height:31px"></div>
<div class="t tab" style="left:475px;top:73px">Part/Rev</div>
<div class="t tab on" style="left:549px;top:72px">Rule Sets</div>
<div class="t tab" style="left:632px;top:73px">Enterprise Configurator</div>
<div class="t tab" style="left:802px;top:73px">Comments</div>
<div class="abs ul" style="left:542px;top:91px;width:79px"></div>
<div class="t sm" style="left:477px;top:99px">Rule Set</div>
<div class="t lbl" style="left:466px;width:200px;top:120px">Assembly Part:</div>
<div class="abs fld" style="left:674px;top:117px;width:420px;height:20px"><span class="sg" style="display:inline-block;transform:scaleX(.89)">GTB FLATBED CONFIG</span></div>
<div class="t lbl" style="left:466px;width:200px;top:146px">Operation:</div>
<div class="abs fld" style="left:674px;top:142px;width:52px;height:20px">10</div>
<div class="t lbl" style="left:836px;width:200px;top:146px">Scheduling Resource:</div>
<div class="abs fld" style="left:1044px;top:141px;width:50px;height:21px">0</div>
<div class="t lbl" style="left:530.8px;top:198px;text-align:left">Keep When</div>
<div class="abs white" style="left:466px;top:234px;width:992px;height:29px"></div>
<div class="t tab on" style="left:476px;top:239px">Detail</div>
<div class="t tab" style="left:529px;top:240px">List</div>
<div class="abs ul" style="left:468px;top:258px;width:52px"></div>
<div class="t sm sg" style="left:478px;top:268px;transform:scaleX(.97)">Rule Definition</div>
<div class="abs" style="left:560px;top:285px;width:898px;height:1px;background:#dedede"></div>
<div class="abs" style="left:560px;top:286px;width:898px;height:20px;background:#f5f5f5"></div>
<div class="abs" style="left:560px;top:306px;width:898px;height:1px;background:#dedede"></div>
<div class="abs" style="left:485px;top:312px;width:973px;height:589px;background:#e9e9e9"></div>
<div class="abs" style="left:485px;top:331px;width:19px;height:1px;background:#f4f4f4"></div>
<div class="abs" style="left:485px;top:352px;width:19px;height:1px;background:#f4f4f4"></div>
<div class="abs" style="left:504px;top:331px;width:960px;height:22px;border:1px solid #000;background:#eaeaea"></div>
<svg class="abs" style="left:492px;top:338px" width="6" height="9" viewBox="0 0 6 9"><path d="M0 0L5.2 4.5L0 9Z" fill="#000"/></svg>
<div class="t" style="left:506px;top:336px;font-size:11px;color:#000;line-height:14px;letter-spacing:.1px">Execute<span style="color:#1a1aff;text-decoration:underline;outline:1px dotted #0000ff;margin-left:.5px;padding:0 1px 0 1.5px">QuoteMtl.PartNum = Inputs.cmbTransferTank.Value;</span></div>
<div class="abs" style="left:325px;top:18px;width:308px;height:26px;background:rgba(70,175,230,.16)"></div>
<svg class="abs" style="left:5px;top:22px" width="15" height="18" viewBox="0 0 15 18"><path d="M6.2 1.8H11.4Q12.7 1.8 12.7 3.1V14.9Q12.7 16.2 11.4 16.2H3Q1.7 16.2 1.7 14.9V6.4Z" fill="none" stroke="#eef2f5" stroke-width="1.5" stroke-linejoin="round"/><path d="M6.4 2V5.2Q6.4 6.4 5.2 6.4H2" fill="none" stroke="#eef2f5" stroke-width="1"/><path d="M2.4 5.8L5.8 2.4V5.8Z" fill="#eef2f5" opacity=".55"/></svg>
<svg class="abs" style="left:25px;top:29px" width="6" height="3" viewBox="0 0 6 3"><path d="M0 0H5.6L2.8 3Z" fill="#eef2f5"/></svg>
<svg class="abs" style="left:37px;top:24px" width="16" height="15" viewBox="0 0 16 15"><path d="M1.5 0H13.4L16 2.6V13.5Q16 15 14.5 15H1.5Q0 15 0 13.5V1.5Q0 0 1.5 0Z" fill="#ececec"/><rect x="4" y="0" width="8.8" height="5.2" fill="#2193ca"/><rect x="9.2" y="0.6" width="2" height="4" fill="#ececec"/><path d="M2.4 13.2V8.6H12.8" fill="none" stroke="#2193ca" stroke-width=".9"/></svg>
<svg class="abs" style="left:63px;top:23px" width="16" height="16" viewBox="0 0 16 16"><path d="M2.4 2.4L13.6 13.6M13.6 2.4L2.4 13.6" stroke="#dcdcdc" stroke-width="3.3"/></svg>
<svg class="abs" style="left:88px;top:26px" width="18" height="14" viewBox="0 0 18 14"><path d="M2.6 2.4Q5.6 0.6 8.3 2.6V10.4Q5.6 8.8 2.6 10.2Z M15.4 2.4Q12.4 0.6 9.7 2.6V10.4Q12.4 8.8 15.4 10.2Z" fill="#dcdcdc"/><path d="M1.2 4V11.8H7.4L9 12.6L10.6 11.8H16.8V4" fill="none" stroke="#a6d0ea" stroke-width=".9"/><path d="M2.6 10.8Q5.8 9.6 8.4 11M15.4 10.8Q12.2 9.6 9.6 11" fill="none" stroke="#a6d0ea" stroke-width=".7"/></svg>
<svg class="abs" style="left:115px;top:22px" width="17" height="18" viewBox="0 0 17 18"><rect x="2.5" y="5.5" width="13" height="11.2" fill="#d9d9d9" stroke="#9c8f8c" stroke-width="1"/><path d="M2.6 11.4V4.6A3.9 3.9 0 0 1 10.4 4.6V11.6A2.6 2.6 0 0 1 5.2 11.6V5.4A1.3 1.3 0 0 1 7.8 5.4V10.8" fill="none" stroke="#7e8082" stroke-width="1.9"/><path d="M2.6 11.4V4.6A3.9 3.9 0 0 1 10.4 4.6V11.6A2.6 2.6 0 0 1 5.2 11.6V5.4A1.3 1.3 0 0 1 7.8 5.4V10.8" fill="none" stroke="#cfd1d1" stroke-width=".6"/></svg>
<svg class="abs" style="left:140px;top:22px" width="18" height="17" viewBox="0 0 18 17"><path d="M6.6 2.2C1.6 4.6 1.4 10.4 5 13.4" fill="none" stroke="#eef2f5" stroke-width="2.9"/><path d="M2 15.8H8.2V11.4Z" fill="#eef2f5"/><path d="M11.4 15.2C16.4 12.8 16.6 7 13 4" fill="none" stroke="#eef2f5" stroke-width="2.9"/><path d="M16 1.2H9.8V5.6Z" fill="#eef2f5"/><path d="M4.6 4.2L3.8 5.2M13.4 13.2L14.2 12.2" stroke="#2193ca" stroke-width=".7"/></svg>
<svg class="abs" style="left:166px;top:22px" width="18" height="18" viewBox="0 0 18 18"><path d="M16.4 1.8L11.8 6.4" stroke="#eef2f5" stroke-width="2.2" stroke-linecap="round"/><path d="M10.4 5.2L13.4 8.2L12 9.8L8.8 6.6Z" fill="#eef2f5"/><path d="M8.2 7.2L11.6 10.6L8.6 16.8L1.2 9.6Z" fill="#eef2f5"/><path d="M4.4 10.4L5.6 11.4M6.4 8.8L7.6 9.8M6.2 12.6L7.4 13.6M8.4 10.8L9.4 11.6" stroke="#2193ca" stroke-width=".8"/></svg>
<svg class="abs" style="left:198px;top:23px" width="18" height="16" viewBox="0 0 18 16"><path d="M3.2 1.2Q5.8 1.6 6.6 4.2L10.4 9.6L8.2 10.8Z" fill="#eef2f5"/><path d="M14.8 1.2Q12.2 1.6 11.4 4.2L7.6 9.6L9.8 10.8Z" fill="#eef2f5"/><path d="M8.2 9.6L5.8 11.4M9.8 9.6L12.2 11.4" stroke="#eef2f5" stroke-width="1.4"/><ellipse cx="4" cy="12.6" rx="2.7" ry="2.1" fill="none" stroke="#eef2f5" stroke-width="1.3"/><ellipse cx="14" cy="12.6" rx="2.7" ry="2.1" fill="none" stroke="#eef2f5" stroke-width="1.3"/><circle cx="9" cy="8.6" r=".6" fill="#2193ca"/></svg>
<svg class="abs" style="left:226px;top:22px" width="15" height="18" viewBox="0 0 15 18"><path d="M4.8 13.8H3Q1.8 13.8 1.8 12.6V5.4L5.4 1.8H9.8Q11 1.8 11 3V6.4" fill="none" stroke="#eef2f5" stroke-width="1.3"/><path d="M5.6 2V4.6Q5.6 5.6 4.6 5.6H2" fill="none" stroke="#eef2f5" stroke-width="1"/><path d="M8.6 7H12Q13.2 7 13.2 8.2V15Q13.2 16.2 12 16.2H6.4Q5.2 16.2 5.2 15V10.4Z" fill="none" stroke="#eef2f5" stroke-width="1.3"/><path d="M8.8 7.2V9.6Q8.8 10.6 7.8 10.6H5.4" fill="none" stroke="#eef2f5" stroke-width="1"/></svg>
<svg class="abs" style="left:251px;top:22px" width="16" height="18" viewBox="0 0 16 18"><path d="M8 16H2.8Q2 16 2 15.2V4.4Q2 3.6 2.8 3.6H11.8Q12.6 3.6 12.6 4.4V9" fill="none" stroke="#eef2f5" stroke-width="1.3"/><path d="M4.2 5.6V3.4H5.6Q6 1.2 7.3 1.2Q8.6 1.2 9 3.4H10.4V5.6Z" fill="#eef2f5"/><circle cx="7.3" cy="2.7" r=".7" fill="#2193ca"/><path d="M8.8 9.8H12.4L15 12.4V16.6H8.8Z" fill="#eef2f5"/><path d="M10 13.6H13.8M10 15.2H13.8" stroke="#2193ca" stroke-width=".7"/></svg>
<svg class="abs" style="left:276px;top:25px" width="18" height="12" viewBox="0 0 18 12"><path d="M5 6.6C8.6 1.6 15.4 3 15.8 10.6" fill="none" stroke="#eef2f5" stroke-width="2.5"/><path d="M1.2 3.4L0.8 10L7.8 9.4Z" fill="#eef2f5"/></svg>
<svg class="abs" style="left:304px;top:24px" width="16" height="14" viewBox="0 0 16 14"><path d="M2.4 0H6.6V2H6.2L6.4 4.4H9.6L9.8 2H9.4V0H13.6V2H13.2L15.8 10.6V14H9V6.8H7V14H0.2V10.6L2.8 2H2.4Z" fill="#eef2f5"/><path d="M0.2 12H7M9 12H15.8" stroke="#2193ca" stroke-width=".7"/></svg>
<div class="abs" style="left:329px;top:20px;width:22px;height:22px;border-radius:2.5px;background:rgba(152,162,168,.72);box-shadow:0 0 0 .6px rgba(95,180,230,.75)"></div>
<div class="abs" style="left:353px;top:20px;width:22px;height:22px;border-radius:2.5px;background:rgba(152,162,168,.72);box-shadow:0 0 0 .6px rgba(95,180,230,.75)"></div>
<div class="abs" style="left:584px;top:20px;width:22px;height:22px;border-radius:2.5px;background:rgba(152,162,168,.72);box-shadow:0 0 0 .6px rgba(95,180,230,.75)"></div>
<div class="abs" style="left:608px;top:20px;width:22px;height:22px;border-radius:2.5px;background:rgba(152,162,168,.72);box-shadow:0 0 0 .6px rgba(95,180,230,.75)"></div>
<svg class="abs" style="left:329px;top:20px" width="22" height="22" viewBox="0 0 22 22"><rect x="3.9" y="5" width="3.6" height="13.2" fill="#adc4d1"/><path d="M16.2 5V18.2L8.8 11.6Z" fill="#adc4d1"/></svg>
<svg class="abs" style="left:353px;top:20px" width="22" height="22" viewBox="0 0 22 22"><path d="M15 4.2V18.2L7 11.2Z" fill="#adc4d1"/></svg>
<svg class="abs" style="left:584px;top:20px" width="22" height="22" viewBox="0 0 22 22"><path d="M6 4.2V18.2L14.4 11.2Z" fill="#adc4d1"/></svg>
<svg class="abs" style="left:608px;top:20px" width="22" height="22" viewBox="0 0 22 22"><path d="M4.4 5V18.2L12 11.6Z" fill="#adc4d1"/><rect x="12.6" y="5" width="3.6" height="13.2" fill="#adc4d1"/></svg>
<div class="abs" style="left:378px;top:20px;width:204px;height:22px;background:#fff"></div>
<div class="abs" style="left:564px;top:20px;width:18px;height:22px;background:#f5f5f5"></div>
<div class="t sg" style="left:384px;top:25px;font-size:11px;line-height:13px;color:#111;transform:scaleX(.88)">GTB FLATBED CONFIG</div>
<svg class="abs" style="left:569px;top:29px" width="8" height="5" viewBox="0 0 8 5"><path d="M0 0H7.4L3.7 4.4Z" fill="#000"/></svg>
<svg class="abs" style="left:638.5px;top:22.5px" width="17" height="17" viewBox="0 0 17 17"><circle cx="8.5" cy="8.5" r="7.3" fill="none" stroke="#eef2f5" stroke-width="1.2"/><path d="M13 8.5H5M8.2 5L4.6 8.5L8.2 12" fill="none" stroke="#eef2f5" stroke-width="1.9"/></svg>
<svg class="abs" style="left:664.5px;top:22.5px" width="17" height="17" viewBox="0 0 17 17"><circle cx="8.5" cy="8.5" r="7.3" fill="none" stroke="#eef2f5" stroke-width="1.2"/><path d="M4 8.5H12M8.8 5L12.4 8.5L8.8 12" fill="none" stroke="#eef2f5" stroke-width="1.9"/></svg>
<svg class="abs" style="left:690.7px;top:22.5px" width="17" height="17" viewBox="0 0 17 17"><circle cx="8.5" cy="8.5" r="7.3" fill="none" stroke="#eef2f5" stroke-width="1.2"/><path d="M8.5 3.6L13.2 8H12V12.6H9.6V9.6H7.4V12.6H5V8H3.8Z" fill="#eef2f5"/><rect x="10.6" y="4" width="1.4" height="2.6" fill="#eef2f5"/></svg>
<div class="abs" id="dlg" style="left:558px;top:169px;width:806px;height:644px;background:#f0f0f0;border:1px solid #626262;box-shadow:0 8px 15px -4px rgba(0,0,0,.32),0 1px 13px rgba(0,0,0,.12)"></div>
<div class="abs white" style="left:559px;top:170px;width:804px;height:30px"></div>
<svg class="abs" style="left:568px;top:179px" width="14" height="11" viewBox="0 0 14 11"><rect x="0" y="0.2" width="13.8" height="10" rx="2.6" fill="#12bdf2"/><rect x="3.4" y="3" width="7" height="4.3" rx=".9" fill="#fff"/></svg>
<div class="t" style="left:588px;top:178px;font-size:12px;line-height:14px;color:#000;transform:scaleX(.945);transform-origin:0 50%">Specify an Expression</div>
<div class="abs" style="left:1244px;top:184px;width:10px;height:1px;background:#111"></div>
<div class="abs" style="left:1289px;top:179px;width:10px;height:10px;border:1px solid #111"></div>
<svg class="abs" style="left:1334px;top:178px" width="12" height="12" viewBox="0 0 12 12"><path d="M1 1L11 11M11 1L1 11" stroke="#111" stroke-width="1.1"/></svg>
<div class="abs white" style="left:559px;top:200px;width:804px;height:190px"></div>
<div class="abs" style="left:560px;top:200px;width:389px;height:21px;background:#f0f0f0"></div>
<div class="abs" style="left:954px;top:200px;width:409px;height:21px;background:#f0f0f0"></div>
<div class="abs" style="left:951px;top:200px;width:1px;height:188px;background:#f3f3f3"></div>
<div class="t hdrt sg" style="left:561px;top:202px;color:#111;transform:scaleX(.889)">Available Selections</div>
<div class="t hdrt sg" style="left:956px;top:202px;color:#555;transform:scaleX(.88)">Functions</div>
<svg class="abs" style="left:933px;top:206px" width="7" height="9" viewBox="0 0 7 9"><path d="M1 0H6V5H7V6H4V9H3V6H0V5H1Z M2 1V5H4V1Z" fill="#7a8087" fill-rule="evenodd"/></svg>
<svg class="abs" style="left:1347px;top:206px" width="7" height="9" viewBox="0 0 7 9"><path d="M1 0H6V5H7V6H4V9H3V6H0V5H1Z M2 1V5H4V1Z" fill="#7a8087" fill-rule="evenodd"/></svg>
<svg class="abs" style="left:565px;top:227px" width="6" height="9" viewBox="0 0 6 9"><path d="M0.6 0.8L4.8 4.5L0.6 8.2Z" fill="#fff" stroke="#9a9a9a" stroke-width="1"/></svg>
<div class="t dtree" style="left:580px;top:223px;color:#1c8cee">Inputs</div>
<svg class="abs" style="left:565px;top:243px" width="6" height="9" viewBox="0 0 6 9"><path d="M0.6 0.8L4.8 4.5L0.6 8.2Z" fill="#fff" stroke="#9a9a9a" stroke-width="1"/></svg>
<div class="t dtree" style="left:580px;top:239px;">Target Entities</div>
<svg class="abs" style="left:565px;top:259px" width="6" height="9" viewBox="0 0 6 9"><path d="M0.6 0.8L4.8 4.5L0.6 8.2Z" fill="#fff" stroke="#9a9a9a" stroke-width="1"/></svg>
<div class="t dtree" style="left:580px;top:255px;">Methods</div>
<svg class="abs" style="left:565px;top:275px" width="6" height="9" viewBox="0 0 6 9"><path d="M0.6 0.8L4.8 4.5L0.6 8.2Z" fill="#fff" stroke="#9a9a9a" stroke-width="1"/></svg>
<div class="t dtree" style="left:580px;top:271px;">RuleFunctions</div>
<svg class="abs" style="left:960px;top:227px" width="6" height="9" viewBox="0 0 6 9"><path d="M0.6 0.8L4.8 4.5L0.6 8.2Z" fill="#fff" stroke="#9a9a9a" stroke-width="1"/></svg>
<div class="t dtree" style="left:975px;top:223px;color:#1c8cee">Functions</div>
<svg class="abs" style="left:960px;top:243px" width="6" height="9" viewBox="0 0 6 9"><path d="M0.6 0.8L4.8 4.5L0.6 8.2Z" fill="#fff" stroke="#9a9a9a" stroke-width="1"/></svg>
<div class="t dtree" style="left:975px;top:239px;">Operators</div>
<svg class="abs" style="left:960px;top:259px" width="6" height="9" viewBox="0 0 6 9"><path d="M0.6 0.8L4.8 4.5L0.6 8.2Z" fill="#fff" stroke="#9a9a9a" stroke-width="1"/></svg>
<div class="t dtree" style="left:975px;top:255px;">Utilities</div>
<div class="abs" style="left:562px;top:398px;width:670px;height:273px;background:#f0f0f0;border:1px solid #6a6a6a"></div>
<div class="abs" style="left:575px;top:401px;width:1px;height:48px;background:#f2dc6a"></div>
<div class="t" style="left:578px;top:399px;font-family:'Liberation Mono',monospace;font-size:13.33px;line-height:17px;color:#000;white-space:pre">QuoteMtl.PartNum = Inputs.cmbTransferTank.Value;
SetPartDefaults();</div>
<div class="btn kb" style="left:1238px;top:398px">+</div>
<div class="btn kb" style="left:1266px;top:398px">-</div>
<div class="btn kb" style="left:1294px;top:398px">*</div>
<div class="btn kb" style="left:1322px;top:398px">/</div>
<div class="btn kb" style="left:1238px;top:427px">==</div>
<div class="btn kb" style="left:1266px;top:427px">&lt;</div>
<div class="btn kb" style="left:1294px;top:427px">&gt;</div>
<div class="btn kb" style="left:1322px;top:427px">!=</div>
<div class="btn kb" style="left:1239px;top:456px">&lt;=</div>
<div class="btn kb" style="left:1267px;top:456px">&gt;=</div>
<div class="btn kb" style="left:1295px;top:456px">(</div>
<div class="btn kb" style="left:1323px;top:456px">)</div>
<div class="btn kb" style="left:1239px;top:485px">&quot;</div>
<div class="btn kb" style="left:1267px;top:485px">,</div>
<div class="btn kb" style="left:1295px;top:485px">:</div>
<div class="btn kb" style="left:1323px;top:485px">/*</div>
<div class="btn kw" style="left:1238px;top:514px;width:38px">And</div>
<div class="btn kw" style="left:1276px;top:514px;width:38px">Or</div>
<div class="btn kw" style="left:1316px;top:514px;width:36px">Not</div>
<div class="btn kw" style="left:1238px;top:545px;width:56px">True</div>
<div class="btn kw" style="left:1296px;top:545px;width:56px">False</div>
<div class="btn kw" style="left:1267px;top:576px;width:56px">Null</div>
<div class="abs" style="left:564px;top:677px;width:669px;height:78px;background:#ffffe1;border:1px solid;border-color:#8a8a8a #fff #fff #8a8a8a"></div>
<div class="abs" style="left:565px;top:678px;width:667px;height:76px;border:1px solid;border-color:#6a6a6a #f0f0e0 #f0f0e0 #6a6a6a"></div>
<div class="btn" style="left:564px;top:762px;width:75px;height:22px;line-height:22px;">OK</div>
<div class="btn" style="left:660px;top:762px;width:75px;height:22px;line-height:22px;">Cancel</div>
<div class="btn" style="left:1237px;top:672px;width:113px;height:22px;line-height:22px;">Add References</div>
<div class="btn" style="left:1239px;top:700px;width:113px;height:22px;line-height:22px;background:#b2b9bf;color:#8a8f94;">Expression Builder</div>
<div class="btn" style="left:1239px;top:728px;width:113px;height:22px;line-height:22px;">Check Syntax</div>
<div class="abs" style="left:559px;top:792px;width:804px;height:20px;background:linear-gradient(90deg,#2196cc 0,#1584bf 40%,#0a73b1 68%,#0462a3 100%)"></div>
<div class="t" style="left:562px;top:797px;font-size:11px;line-height:13px;color:#fff;letter-spacing:.3px">Ready</div>
</body></html>
